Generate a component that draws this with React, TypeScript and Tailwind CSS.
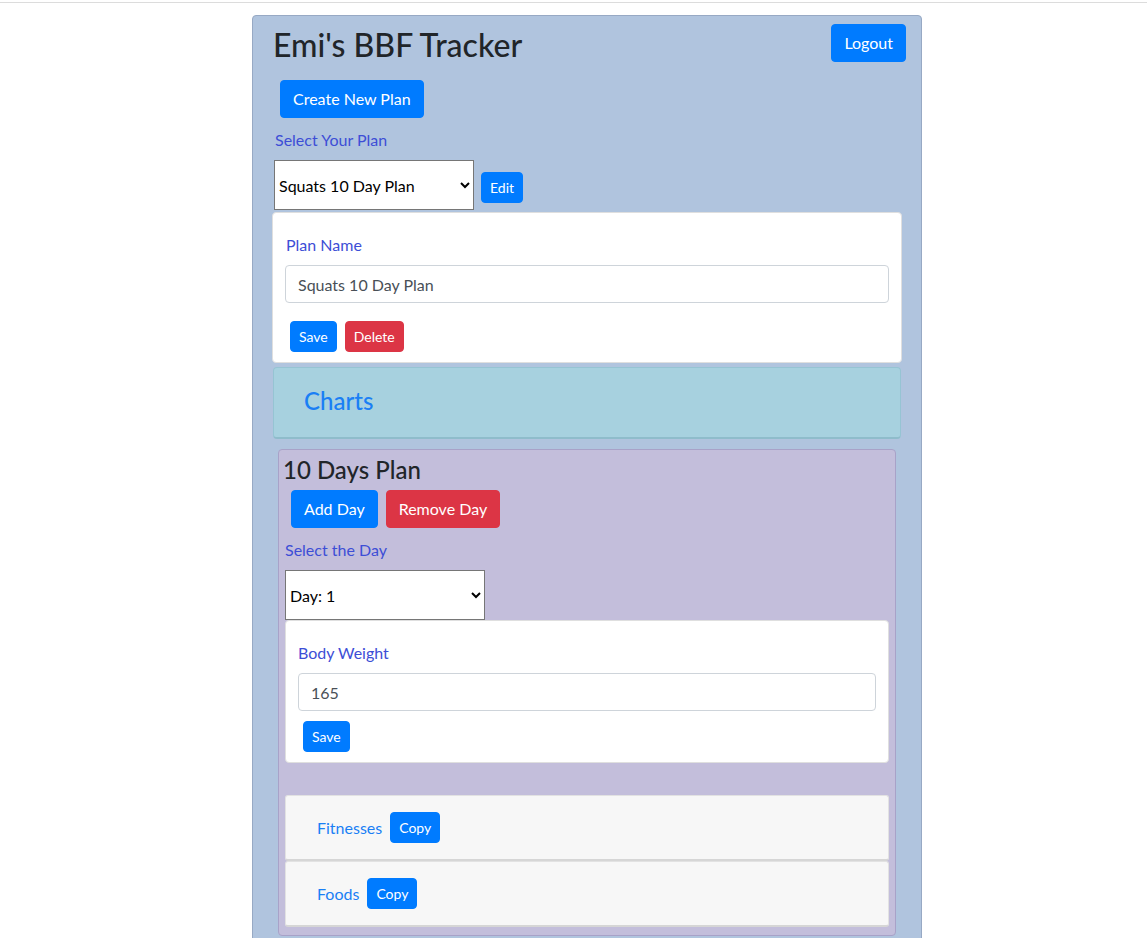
import React from 'react';

const font = { fontFamily: 'Lato, "Open Sans", sans-serif' };

function Btn({ children, color = 'blue', size = 'md', className = '' }: { children: React.ReactNode; color?: 'blue' | 'red'; size?: 'md' | 'sm'; className?: string }) {
  const bg = color === 'blue' ? 'bg-[#007bff] border-[#007bff]' : 'bg-[#dc3545] border-[#dc3545]';
  const sz = size === 'md' ? 'h-[38px] px-3 text-[16px]' : 'h-[31px] px-2 text-[14px]';
  return (
    <button className={`${bg} ${sz} inline-flex items-center justify-center rounded-[4px] border text-white leading-none ${className}`}>
      {children}
    </button>
  );
}

function Label({ children, className = '' }: { children: React.ReactNode; className?: string }) {
  return <div className={`text-[16px] leading-6 text-[#3d4ed6] ${className}`}>{children}</div>;
}

function AccordionItem({ title }: { title: string }) {
  return (
    <div className="flex items-center gap-2 h-[66px] pl-[31px] bg-[#f7f7f7] border border-[#e2e2e2] border-b-2 border-b-[#d6d6d6] rounded-[3px]">
      <span className="text-[16px] text-[#1a7ff5]">{title}</span>
      <Btn size="sm">Copy</Btn>
    </div>
  );
}

export default function App() {
  return (
    <div className="min-h-screen bg-white text-[#212529]" style={font}>
      <div className="pt-[2px]">
        <div className="h-[1px] bg-[#dcdcdc]" />
      </div>

      <div className="ml-[252px] mt-[12px] w-[670px] min-h-[940px] rounded-[4px] border border-[#97a9c4] bg-[#b0c4de] pt-[8px] pl-[19px] pr-[15px]">
        {/* Header */}
        <div className="flex items-start justify-between">
          <h2 className="ml-[1px] text-[32px] font-medium leading-[38px] mt-[2px]">Emi's BBF Tracker</h2>
          <Btn>Logout</Btn>
        </div>

        <div className="mt-[16px] ml-[8px]">
          <Btn>Create New Plan</Btn>
        </div>

        <Label className="mt-[10px] ml-[3px]">Select Your Plan</Label>

        <div className="mt-[8px] flex items-start gap-[7px] ml-[2px]">
          <select className="h-[50px] w-[200px] border border-[#767676] bg-white text-[16px] text-black">
            <option>Squats 10 Day Plan</option>
          </select>
          <Btn size="sm" className="mt-[12px]">Edit</Btn>
        </div>

        {/* Plan card */}
        <div className="mt-[2px] w-[630px] rounded-[4px] border border-[#dfdfdf] bg-white px-[12px] pt-[20px] pb-[10px]">
          <Label className="ml-[1px]">Plan Name</Label>
          <input
            readOnly
            value="Squats 10 Day Plan"
            className="mt-[8px] h-[38px] w-full rounded-[4px] border border-[#ced4da] px-3 text-[16px] text-[#495057]"
          />
          <div className="mt-[18px] ml-[5px] flex gap-2">
            <Btn size="sm">Save</Btn>
            <Btn size="sm" color="red">Delete</Btn>
          </div>
        </div>

        {/* Charts */}
        <div className="mt-[4px] ml-[1px] w-[628px] h-[72px] rounded-[4px] border border-[#96c4d3] border-b-2 border-b-[#8fbccb] bg-[#a7d1df] flex items-center pl-[30px] pb-[3px]">
          <span className="text-[24px] font-medium text-[#1a7ff5]">Charts</span>
        </div>

        {/* Days plan */}
        <div className="mt-[10px] ml-[6px] w-[618px] rounded-[4px] border border-[#a8a2c8] bg-[#c3bedb] pl-[6px] pr-[6px] pt-[4px] pb-[8px]">
          <h3 className="ml-[-2px] text-[24px] font-medium leading-[32px]">10 Days Plan</h3>
          <div className="mt-[4px] ml-[6px] flex gap-2">
            <Btn>Add Day</Btn>
            <Btn color="red">Remove Day</Btn>
          </div>
          <Label className="mt-[10px]">Select the Day</Label>
          <select className="mt-[8px] h-[50px] w-[200px] border border-[#767676] bg-white text-[16px] text-black">
            <option>Day: 1</option>
          </select>

          <div className="w-[604px] rounded-[4px] border border-[#dfdfdf] bg-white px-[12px] pt-[20px] pb-[10px]">
            <Label>Body Weight</Label>
            <input
              readOnly
              value="165"
              className="mt-[8px] h-[38px] w-full rounded-[4px] border border-[#ced4da] px-3 text-[16px] text-[#495057]"
            />
            <div className="mt-[10px] ml-[5px] flex">
              <Btn size="sm">Save</Btn>
            </div>
          </div>

          <div className="mt-[32px] w-[604px] flex flex-col">
            <AccordionItem title="Fitnesses" />
            <AccordionItem title="Foods" />
          </div>
        </div>
      </div>
    </div>
  );
}
